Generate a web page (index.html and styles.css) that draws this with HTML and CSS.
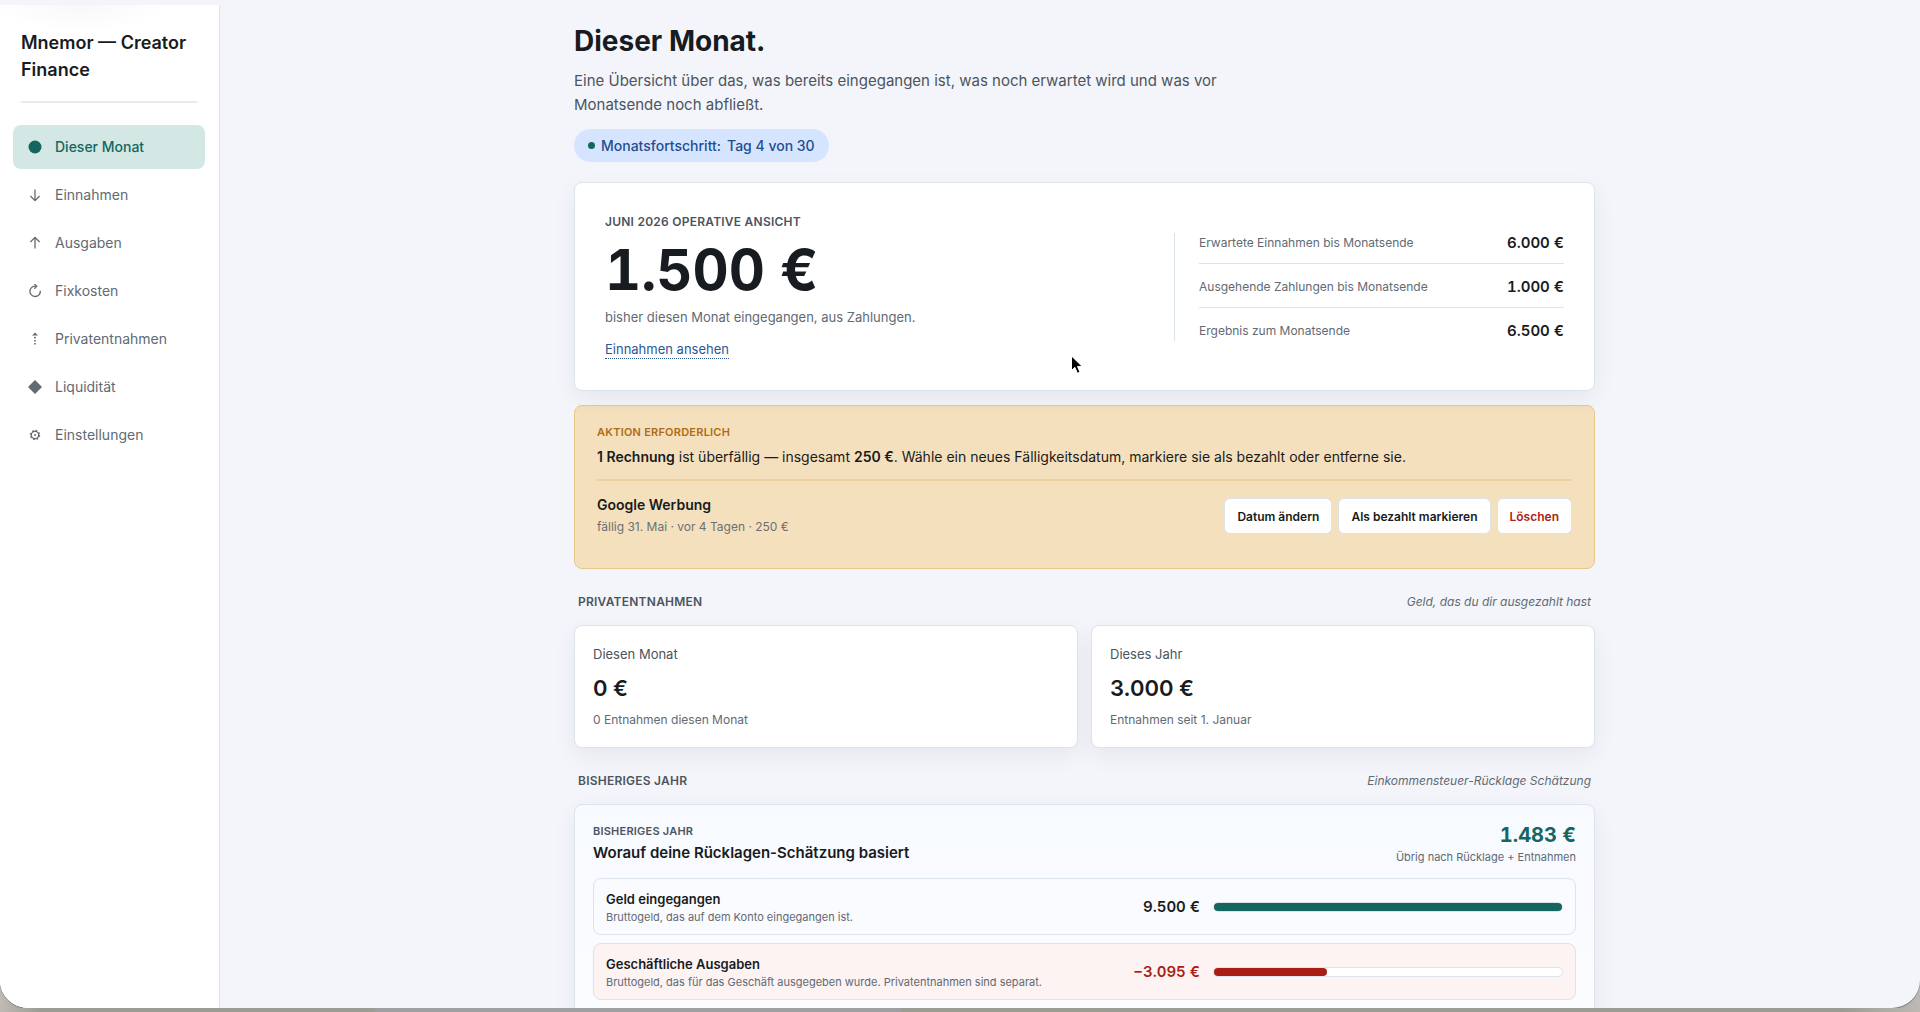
FILE: index.html
```html
<!DOCTYPE html>
<html lang="de">
<head>
    <meta charset="UTF-8">
    <meta name="viewport" content="width=device-width, initial-scale=1.0">
    <title>Mnemor — Creator Finance</title>
    <link rel="stylesheet" href="styles.css">
</head>
<body>
    <div class="window">
        <aside class="sidebar">
            <div class="brand">Mnemor — Creator Finance</div>
            <nav class="nav">
                <a class="nav-link active" href="#monat">
                    <svg class="icon" viewBox="0 0 14 14"><circle cx="7" cy="7" r="6.5" fill="currentColor"/></svg>
                    Dieser Monat
                </a>
                <a class="nav-link" href="#einnahmen">
                    <svg class="icon line" viewBox="0 0 14 14"><path d="M7 1.5v11M2.4 8 7 12.6 11.6 8"/></svg>
                    Einnahmen
                </a>
                <a class="nav-link" href="#ausgaben">
                    <svg class="icon line" viewBox="0 0 14 14"><path d="M7 12.5v-11M2.4 6 7 1.4 11.6 6"/></svg>
                    Ausgaben
                </a>
                <a class="nav-link" href="#fixkosten">
                    <svg class="icon line" viewBox="0 0 14 14"><path d="M12.3 6.8A5.2 5.2 0 1 1 8.5 2.3M6.4 0 8.7 2.3 6.4 4.8"/></svg>
                    Fixkosten
                </a>
                <a class="nav-link" href="#privatentnahmen">
                    <svg class="icon" viewBox="0 0 14 14" fill="currentColor"><path d="M7 .6 10 3.5H4zM6.2 4.8h1.6v1.6H6.2zM6.2 7.9h1.6v1.6H6.2zM6.2 11h1.6v1.6H6.2z"/></svg>
                    Privatentnahmen
                </a>
                <a class="nav-link" href="#liquiditaet">
                    <svg class="icon" viewBox="0 0 14 14"><path d="M7 0l7 7-7 7-7-7z" fill="currentColor"/></svg>
                    Liquidität
                </a>
                <a class="nav-link" href="#einstellungen">
                    <svg class="icon" viewBox="0 0 14 14" fill="none" stroke="currentColor">
                        <circle cx="7" cy="7" r="3.7" stroke-width="1.3"/>
                        <circle cx="7" cy="7" r="4.6" stroke-width="1.2" stroke-dasharray="1.8 1.813"/>
                        <circle cx="7" cy="7" r="1" fill="currentColor" stroke="none"/>
                    </svg>
                    Einstellungen
                </a>
            </nav>
        </aside>

        <main class="main">
            <div class="content">
                <header class="page-head">
                    <h1>Dieser Monat.</h1>
                    <p>Eine Übersicht über das, was bereits eingegangen ist, was noch erwartet wird und was vor Monatsende noch abfließt.</p>
                    <div class="pill"><span class="dot"></span><span>Monatsfortschritt:</span><span>Tag 4 von 30</span></div>
                </header>

                <section class="card hero">
                    <div class="hero-left">
                        <h2 class="label">Juni 2026 operative Ansicht</h2>
                        <div class="hero-value">1.500 €</div>
                        <p>bisher diesen Monat eingegangen, aus Zahlungen.</p>
                        <a class="hero-link" href="#einnahmen">Einnahmen ansehen</a>
                    </div>
                    <dl class="hero-list">
                        <div><dt>Erwartete Einnahmen bis Monatsende</dt><dd>6.000 €</dd></div>
                        <div><dt>Ausgehende Zahlungen bis Monatsende</dt><dd>1.000 €</dd></div>
                        <div><dt>Ergebnis zum Monatsende</dt><dd>6.500 €</dd></div>
                    </dl>
                    <svg class="cursor" viewBox="0 0 14 20"><path d="M1.5 1v14.5l3.4-3.2 2.5 6 2.6-1.1-2.5-5.8h4.7z" fill="#000" stroke="#fff" stroke-width="1"/></svg>
                </section>

                <section class="alert">
                    <h2 class="label small">Aktion erforderlich</h2>
                    <p class="alert-text"><b>1 Rechnung</b> ist überfällig — insgesamt <b>250 €</b>. Wähle ein neues Fälligkeitsdatum, markiere sie als bezahlt oder entferne sie.</p>
                    <div class="invoice">
                        <div>
                            <h3>Google Werbung</h3>
                            <p>fällig 31. Mai · vor 4 Tagen · 250 €</p>
                        </div>
                        <div class="actions">
                            <button type="button">Datum ändern</button>
                            <button type="button">Als bezahlt markieren</button>
                            <button type="button" class="danger">Löschen</button>
                        </div>
                    </div>
                </section>

                <div class="section-head">
                    <h2 class="label">Privatentnahmen</h2>
                    <em>Geld, das du dir ausgezahlt hast</em>
                </div>
                <div class="stats">
                    <div class="card stat">
                        <h3>Diesen Monat</h3>
                        <div class="stat-value">0 €</div>
                        <p>0 Entnahmen diesen Monat</p>
                    </div>
                    <div class="card stat">
                        <h3>Dieses Jahr</h3>
                        <div class="stat-value">3.000 €</div>
                        <p>Entnahmen seit 1. Januar</p>
                    </div>
                </div>

                <div class="section-head">
                    <h2 class="label">Bisheriges Jahr</h2>
                    <em>Einkommensteuer-Rücklage Schätzung</em>
                </div>
                <section class="card year">
                    <div class="year-head">
                        <div>
                            <div class="label small">Bisheriges Jahr</div>
                            <h3>Worauf deine Rücklagen-Schätzung basiert</h3>
                        </div>
                        <div class="year-total">
                            <strong>1.483 €</strong>
                            <p>Übrig nach Rücklage + Entnahmen</p>
                        </div>
                    </div>
                    <div class="row">
                        <div class="row-text">
                            <h4>Geld eingegangen</h4>
                            <p>Bruttogeld, das auf dem Konto eingegangen ist.</p>
                        </div>
                        <span class="amount">9.500 €</span>
                        <div class="bar"><div class="fill" style="width: 100%"></div></div>
                    </div>
                    <div class="row negative">
                        <div class="row-text">
                            <h4>Geschäftliche Ausgaben</h4>
                            <p>Bruttogeld, das für das Geschäft ausgegeben wurde. Privatentnahmen sind separat.</p>
                        </div>
                        <span class="amount">−3.095 €</span>
                        <div class="bar"><div class="fill" style="width: 32.6%"></div></div>
                    </div>
                </section>
            </div>
        </main>
    </div>
</body>
</html>
```
FILE: styles.css
```css
* {
    box-sizing: border-box;
}
body {
    margin: 0;
    font-family: Inter, "Liberation Sans", sans-serif;
    font-size: 14px;
    line-height: 20px;
    color: #181b20;
    background: linear-gradient(90deg, #c0bab4, #9b9c94 40px, #9b9c94 374px, #9d9fa1 375px, #9d9fa1 900px, #9b9c92 902px, #9b9c94 96%, #bdb9b4);
}
h1, h2, h3, h4, p, dl, dd {
    margin: 0;
}
b {
    font-weight: 600;
}
.window {
    display: flex;
    height: calc(100vh - 4px);
    overflow: hidden;
    background-color: #f3f5fa;
    border-radius: 0 0 28px 28px;
    box-shadow: 0 1px 1px #77787a;
}

/* Sidebar */
.sidebar {
    width: 220px;
    flex-shrink: 0;
    margin-top: 5px;
    padding: 24px 14px 24px 13px;
    background: radial-gradient(ellipse 90px 26px at 80px 0, #f8f8f8, #fff) #fff;
    border-right: 1px solid #dde3ea;
}
.brand {
    margin: 0 8px 22px;
    padding-bottom: 18px;
    border-bottom: 2px solid #e5ebef;
    font-size: 18px;
    line-height: 27px;
    font-weight: 600;
}
.nav {
    display: flex;
    flex-direction: column;
    gap: 4px;
}
.nav-link {
    display: flex;
    align-items: center;
    gap: 13px;
    height: 44px;
    padding: 0 15px;
    border-radius: 8px;
    color: #626a73;
    text-decoration: none;
}
.nav-link.active {
    background-color: #d3e8e4;
    color: #14665f;
    font-weight: 500;
}
.icon {
    width: 14px;
    height: 14px;
}
.icon.line {
    fill: none;
    stroke: currentColor;
    stroke-width: 1.3;
}

/* Content */
.main {
    flex: 1;
    padding: 23px 36px 0 65px;
}
.content {
    max-width: 1021px;
    margin: 0 auto;
}
.page-head h1 {
    font-size: 28px;
    line-height: 36px;
    font-weight: 700;
}
.page-head p {
    max-width: 680px;
    margin: 10px 0 12px;
    font-size: 15px;
    line-height: 24px;
    color: #4c545e;
}
.pill {
    display: inline-flex;
    align-items: center;
    gap: 6px;
    height: 33px;
    padding: 0 14px;
    border-radius: 17px;
    background-color: #d5e5ff;
    color: #1f4e8f;
    font-weight: 500;
}
.dot {
    width: 7px;
    height: 7px;
    border-radius: 50%;
    background-color: #14665f;
}
.card {
    background-color: #fff;
    border: 1px solid #dbe3eb;
    border-radius: 8px;
    box-shadow: 0 8px 24px rgba(20, 25, 45, 0.06);
}
.label {
    font-size: 12px;
    line-height: 16px;
    font-weight: 600;
    letter-spacing: 0.02em;
    text-transform: uppercase;
    color: #4c545e;
}
.label.small {
    font-size: 11px;
}

.hero {
    position: relative;
    display: flex;
    justify-content: space-between;
    align-items: center;
    margin-top: 20px;
    padding: 31px 30px;
}
.hero-value {
    margin: 8px 0 5px;
    font-size: 56px;
    line-height: 64px;
    font-weight: 700;
    font-variant-numeric: tabular-nums;
}
.hero-left p {
    font-size: 13px;
    color: #626a73;
}
.hero-link {
    display: inline-block;
    margin-top: 13px;
    font-size: 13px;
    line-height: 18px;
    color: #2b5797;
    text-decoration: none;
    border-bottom: 1px dotted #2b5797;
}
.hero-list {
    width: 390px;
    padding-left: 24px;
    border-left: 1px solid #dbe3eb;
}
.hero-list div {
    display: flex;
    justify-content: space-between;
    padding: 13px 0 10px;
}
.hero-list div:first-child {
    padding-top: 0;
}
.hero-list div:last-child {
    padding-bottom: 0;
}
.hero-list div + div {
    border-top: 1px solid #dbe3eb;
}
.hero-list dt {
    font-size: 12px;
    color: #626a73;
}
.hero-list dd, .amount {
    font-size: 15px;
    font-weight: 600;
    font-variant-numeric: tabular-nums;
}
.cursor {
    position: absolute;
    left: 495px;
    top: 172px;
    width: 14px;
    height: 20px;
}

.alert {
    margin-top: 14px;
    padding: 18px 22px 31px;
    background-color: #f5e0bd;
    border: 1px solid #e5c98a;
    border-radius: 8px;
}
.alert .label {
    color: #b06c15;
}
.alert-text {
    margin-top: 7px;
    padding-bottom: 12px;
    border-bottom: 2px solid #edd0a2;
}
.invoice {
    display: flex;
    justify-content: space-between;
    align-items: center;
    margin-top: 14px;
}
.invoice h3 {
    font-size: 14px;
    font-weight: 600;
}
.invoice p {
    margin-top: 2px;
    font-size: 12px;
    color: #6c7074;
}
.actions {
    display: flex;
    gap: 6px;
}
button {
    height: 36px;
    padding: 0 12px;
    background-color: #fff;
    border: 1px solid #dbe3eb;
    border-radius: 6px;
    color: #181b20;
    font-family: inherit;
    font-size: 12px;
    font-weight: 600;
    cursor: pointer;
}
button.danger {
    color: #ad2020;
}

.section-head {
    display: flex;
    justify-content: space-between;
    align-items: center;
    margin: 23px 4px 13px;
}
.section-head em {
    font-size: 12px;
    color: #626a73;
}
.stats {
    display: grid;
    grid-template-columns: 1fr 1fr;
    gap: 13px;
}
.stat {
    padding: 18px 18px 17px;
}
.stat h3 {
    font-size: 13px;
    font-weight: 400;
    color: #4c545e;
}
.stat-value {
    margin: 10px 0 8px;
    font-size: 22px;
    line-height: 28px;
    font-weight: 600;
}
.stat p {
    font-size: 12px;
    color: #626a73;
}

/* Year overview */
.year {
    padding: 18px 18px 40px;
    background: linear-gradient(#f7faff, #fbfcff);
}
.year-head {
    display: flex;
    justify-content: space-between;
    margin-bottom: 13px;
}
.year-head h3 {
    margin-top: 4px;
    font-size: 15px;
    font-weight: 600;
}
.year-total {
    text-align: right;
}
.year-total strong {
    font-size: 20px;
    line-height: 24px;
    font-weight: 700;
    font-variant-numeric: tabular-nums;
    color: #14665f;
}
.year-total p, .row p {
    font-size: 11px;
    line-height: 16px;
    color: #626a73;
}
.year-total p {
    margin-top: 2px;
}
.row {
    display: flex;
    align-items: center;
    gap: 13px;
    height: 57px;
    margin-bottom: 8px;
    padding: 0 12px;
    border: 1px solid #dbe3eb;
    border-radius: 8px;
    background-color: #fafbff;
}
.row-text {
    flex: 1;
}
.row h4 {
    font-size: 13px;
    font-weight: 600;
}
.bar {
    width: 350px;
    height: 10px;
    border: 1px solid #dbe3eb;
    border-radius: 5px;
    background-color: #fff;
}
.fill {
    height: 8px;
    border-radius: 4px;
    background-color: #14665f;
}
.negative {
    background-color: #fdf3f2;
}
.negative .amount {
    color: #a81e17;
}
.negative .fill {
    background-color: #a81e17;
}
```
